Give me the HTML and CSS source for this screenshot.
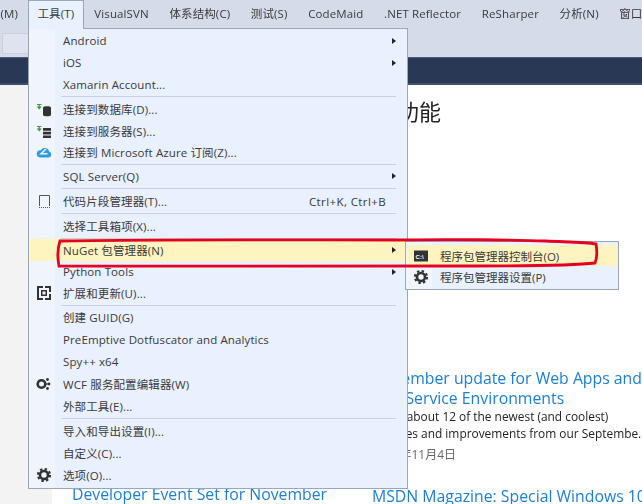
FILE: index.html
```html
<!DOCTYPE html>
<html lang="zh">
<head>
<meta charset="utf-8">
<title>工具菜单</title>
<link rel="stylesheet" href="styles.css">
</head>
<body>
<div class="chrome">
  <nav class="menubar">
    <span class="mi mi-first">(M)</span>
    <span class="mi mi-open">工具(T)</span>
    <span class="mi">VisualSVN</span>
    <span class="mi">体系结构(C)</span>
    <span class="mi">测试(S)</span>
    <span class="mi">CodeMaid</span>
    <span class="mi">.NET Reflector</span>
    <span class="mi">ReSharper</span>
    <span class="mi">分析(N)</span>
    <span class="mi">窗口</span>
  </nav>
  <div class="toolbar"><div class="tool-box"></div></div>
</div>
<div class="band"></div>
<main class="page">
  <div class="rail"></div>
  <div class="content">
    <h1 class="title">新增功能</h1>
    <div class="news">
      <div class="news-left">
        <a class="headline">Developer Event Set for November</a>
      </div>
      <div class="news-right">
        <a class="headline">November update for Web Apps and<br>App Service Environments</a>
        <p class="body">Learn about 12 of the newest (and coolest)<br>features and improvements from our Septembe.</p>
        <p class="date">2015年11月4日</p>
        <a class="headline next">MSDN Magazine: Special Windows 10</a>
      </div>
    </div>
  </div>
</main>

<div class="menu">
  <div class="row"><span>Android</span><i class="arrow"></i></div>
  <div class="row"><span>iOS</span><i class="arrow"></i></div>
  <div class="row"><span>Xamarin Account...</span></div>
  <div class="sep"></div>
  <div class="row"><svg class="ico" viewBox="0 0 16 16"><path d="M1 3.500h4.500M3.250 3.500v3.500M1.500 5.500l1.750 2 1.750-2" fill="none" stroke="#3c9b3c" stroke-width="1.200"/><path d="M7 6.500c0-1.700 8-1.700 8 0v7.500c0 1.700-8 1.700-8 0z" fill="#333"/></svg><span>连接到数据库(D)...</span></div>
  <div class="row"><svg class="ico" viewBox="0 0 16 16"><path d="M1 3.500h4.500M3.250 3.500v3.500M1.500 5.500l1.750 2 1.750-2" fill="none" stroke="#3c9b3c" stroke-width="1.200"/><path d="M7 5h8v2.700H7zM7 8.700h8v2.700H7zM7 12.400h8v2.700H7z" fill="#333"/></svg><span>连接到服务器(S)...</span></div>
  <div class="row"><svg class="ico" viewBox="0 0 16 16"><path d="M4 13.500h8.500a3 3 0 0 0 .6-5.900A4.500 4.500 0 0 0 4.800 6.300 3.600 3.600 0 0 0 4 13.500z" fill="#2f9be0"/><path d="M10 5 5 9.800h6.500" fill="none" stroke="#eef4fd" stroke-width="1.500"/></svg><span>连接到 Microsoft Azure 订阅(Z)...</span></div>
  <div class="sep sep-thin"></div>
  <div class="row"><span>SQL Server(Q)</span><i class="arrow"></i></div>
  <div class="sep"></div>
  <div class="row"><svg class="ico" viewBox="0 0 16 16"><path d="M3.500 13V2.500h10V13" fill="none" stroke="#555" stroke-width="1"/><path d="M3 14.500h11" stroke="#555" stroke-dasharray="1 1"/></svg><span>代码片段管理器(T)...</span><span class="keys">Ctrl+K, Ctrl+B</span></div>
  <div class="sep"></div>
  <div class="row"><span>选择工具箱项(X)...</span></div>
  <div class="sep sep-thin"></div>
  <div class="row row-hot"><span>NuGet 包管理器(N)</span><i class="arrow"></i></div>
  <div class="row"><span>Python Tools</span><i class="arrow"></i></div>
  <div class="row"><svg class="ico" viewBox="0 0 16 16"><path fill-rule="evenodd" d="M1 1h14v6h-2V3H9V1H7v2H3v10h4v2H1zM9 15v-2h4V9h2v6z" fill="#333"/><path fill-rule="evenodd" d="M5 5h6v6H5zM6.500 6.500v3h3v-3z" fill="#333"/></svg><span>扩展和更新(U)...</span></div>
  <div class="sep sep-thin"></div>
  <div class="row"><span>创建 GUID(G)</span></div>
  <div class="row row-lg"><span>PreEmptive Dotfuscator and Analytics</span></div>
  <div class="row row-lg"><span>Spy++ x64</span></div>
  <div class="row row-lg"><svg class="ico" viewBox="0 0 16 16"><circle cx="5.500" cy="8" r="3.800" fill="none" stroke="#333" stroke-width="2.600"/><path d="M10 8h2.500" stroke="#333" stroke-width="1.200"/><circle cx="11.500" cy="3.500" r="1.400" fill="#333"/><circle cx="13" cy="8" r="1.400" fill="#333"/><circle cx="11.500" cy="12.500" r="1.400" fill="#333"/></svg><span>WCF 服务配置编辑器(W)</span></div>
  <div class="row row-lg"><span>外部工具(E)...</span></div>
  <div class="sep"></div>
  <div class="row"><span>导入和导出设置(I)...</span></div>
  <div class="row"><span>自定义(C)...</span></div>
  <div class="row"><svg class="ico" viewBox="0 0 16 16"><circle cx="8" cy="8" r="4" fill="none" stroke="#333" stroke-width="2.600"/><circle cx="8" cy="8" r="6" fill="none" stroke="#333" stroke-width="2.200" stroke-dasharray="2.400 2.300"/></svg><span>选项(O)...</span></div>
</div>

<div class="submenu">
  <div class="subrow subrow-hot"><svg class="ico" viewBox="0 0 16 16"><rect x="1" y="2.500" width="14" height="11" fill="#333"/><text x="2.600" y="10.500" class="ico-text">C:\</text></svg><span>程序包管理器控制台(O)</span></div>
  <div class="subrow"><svg class="ico" viewBox="0 0 16 16"><circle cx="8" cy="8" r="4" fill="none" stroke="#333" stroke-width="2.600"/><circle cx="8" cy="8" r="6" fill="none" stroke="#333" stroke-width="2.200" stroke-dasharray="2.400 2.300"/></svg><span>程序包管理器设置(P)</span></div>
</div>

<svg class="ink" viewBox="0 0 642 504">
  <path d="M59 266C57 256 58 247 60 241C150 239 300 240 400 240C450 239 520 240 546 241C565 242 585 242 596 244C597 250 597 258 595 263C570 266 520 266 470 266C380 267 200 266 59 266Z" fill="none" stroke="#e6001f" stroke-width="2.800"/>
</svg>
</body>
</html>
```
FILE: styles.css
```css
* { box-sizing: border-box; }
html, body { margin: 0; padding: 0; }
body {
  width: 642px;
  height: 504px;
  overflow: hidden;
  position: relative;
  background: #fff;
  font-family: "Open Sans", "Noto Sans CJK SC", sans-serif;
  font-size: 11.5px;
  color: #3a3a3a;
  filter: blur(0.3px);
}
.chrome { background: #d6dbe9; height: 57px; }
.menubar { display: flex; height: 28px; align-items: center; white-space: nowrap; letter-spacing: 0.12px; }
.mi { padding: 0 10.3px; line-height: 28px; flex: none; }
.mi-first { padding: 0 10px 0 0; width: 28px; text-align: right; }
.mi-open {
  width: 56px;
  background: #e9f0fe;
  border: 1px solid #9ba7b7;
  border-bottom: 0;
  position: relative;
  z-index: 3;
  height: 29px;
  margin-top: 1px;
  padding-left: 8.500px;
  line-height: 26px;
}
.toolbar { height: 29px; padding: 5px 0 0 2px; }
.tool-box { width: 30px; height: 21px; background: #dfe3ee; border: 1px solid #c9cfdc; }
.band { height: 28px; background: #293955; border-bottom: 2px solid #3d4f6e; border-top: 1px solid #4a5a78; }
.page { display: flex; height: 419px; }
.rail { width: 52px; background: #f3f3f3; flex: none; }
.content { flex: 1; padding-left: 20px; min-width: 0; }
.title {
  margin: 11px 0 0;
  padding-left: 281px;
  font-weight: 400;
  font-size: 22px;
  line-height: 30px;
  color: #222;
}
.news { display: flex; }
.news-left { width: 300px; flex: none; padding-top: 358px; white-space: nowrap; }
.news-right { flex: none; padding-top: 242px; white-space: nowrap; }
.headline { color: #1c7fd6; font-size: 15.8px; line-height: 20px; display: block; }
.body { margin: 0; font-size: 11.9px; line-height: 17px; color: #222; }
.date { margin: 4px 0 0; font-size: 12px; line-height: 17px; color: #666; }
.next { margin-top: 23px; }
.menu {
  position: absolute;
  left: 28px;
  top: 28px;
  width: 380px;
  height: 461px;
  padding: 1px;
  background: linear-gradient(90deg, #f0f4fd 0, #f0f4fd 26px, #e9f0fe 26px);
  border: 1px solid #9ba7b7;
  letter-spacing: 0.12px;
  z-index: 2;
}
.row {
  height: 21.7px;
  display: flex;
  align-items: center;
  padding: 0 8px 0 33px;
  position: relative;
  white-space: nowrap;
}
.row-lg { height: 22.3px; }
.row-hot { background: #fdf4bf; }
.sep { height: 3.2px; margin: 0 10px 0 31px; display: flex; align-items: center; }
.sep-thin { height: 2.2px; }
.sep::before { content: ""; flex: 1; height: 1px; background: #ccd0dc; }
.keys { position: absolute; right: 20px; letter-spacing: 0.4px; }
.arrow {
  position: absolute;
  right: 10px;
  top: 50%;
  margin-top: -3px;
  border-left: 4px solid #222;
  border-top: 3px solid transparent;
  border-bottom: 3px solid transparent;
}
.ico { position: absolute; left: 6px; top: 50%; margin-top: -8px; width: 16px; height: 16px; }
.submenu {
  position: absolute;
  left: 405px;
  top: 241px;
  width: 214px;
  height: 49px;
  padding: 3px 1px;
  background: linear-gradient(90deg, #f0f4fd 0, #f0f4fd 26px, #e9f0fe 26px);
  border: 1px solid #9ba7b7;
  z-index: 3;
}
.subrow { height: 21px; padding-left: 33px; position: relative; display: flex; align-items: center; white-space: nowrap; }
.subrow-hot { background: #fdf4bf; }
.ico-text { font-size: 6px; font-weight: 700; fill: #fff; font-family: "Liberation Sans", sans-serif; }
.ink { position: absolute; inset: 0; width: 642px; height: 504px; z-index: 4; pointer-events: none; }
```
